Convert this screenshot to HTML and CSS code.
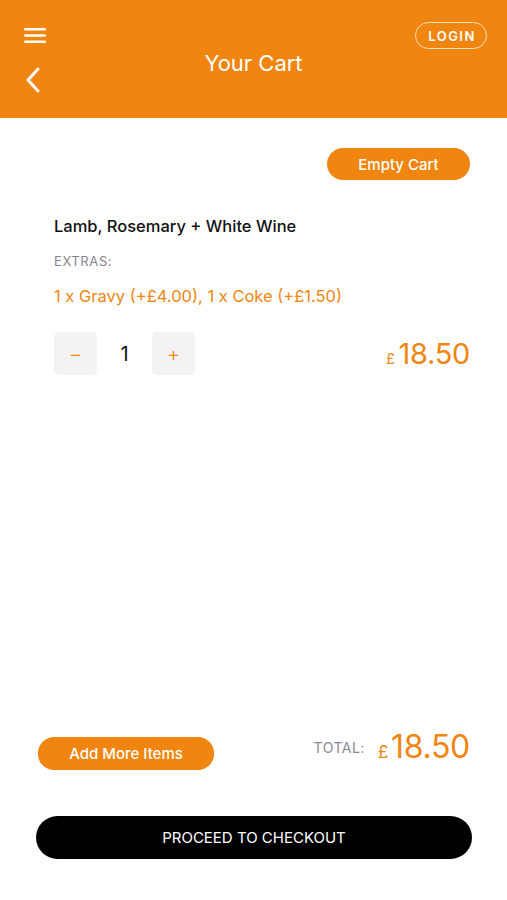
FILE: index.html
```html
<!DOCTYPE html>
<html>
<head>
    <title>Your Cart</title>
    <link rel="stylesheet" href="styles.css">
</head>
<body>
    <div class="app">
        <header class="top-bar">
            <div class="top-row">
                <svg class="menu-icon" width="22" height="15" viewBox="0 0 22 15">
                    <rect x="0" y="0" width="22" height="2.6" rx="1.3" fill="#fff"/>
                    <rect x="0" y="6.2" width="22" height="2.6" rx="1.3" fill="#fff"/>
                    <rect x="0" y="12.4" width="22" height="2.6" rx="1.3" fill="#fff"/>
                </svg>
                <button class="login-button">LOGIN</button>
            </div>
            <div class="title-row">
                <svg class="back-icon" width="16" height="26" viewBox="0 0 16 26">
                    <path d="M13 2 L3 13 L13 24" fill="none" stroke="#fff" stroke-width="3" stroke-linecap="round" stroke-linejoin="round"/>
                </svg>
                <h1 class="page-title">Your Cart</h1>
                <span></span>
            </div>
        </header>

        <main class="cart">
            <div class="cart-actions">
                <button class="pill-button">Empty Cart</button>
            </div>

            <div class="cart-item">
                <div class="item-name">Lamb, Rosemary + White Wine</div>
                <div class="extras-label">EXTRAS:</div>
                <div class="extras-value">1 x Gravy (+£4.00), 1 x Coke (+£1.50)</div>
                <div class="item-row">
                    <div class="stepper">
                        <button class="step-button">&minus;</button>
                        <span class="step-count">1</span>
                        <button class="step-button">+</button>
                    </div>
                    <div class="item-price"><span class="currency">£</span>18.50</div>
                </div>
            </div>
        </main>

        <footer class="cart-footer">
            <div class="total-row">
                <button class="pill-button add-button">Add More Items</button>
                <div class="total">
                    <span class="total-label">TOTAL:</span>
                    <span class="total-value"><span class="currency big">£</span>18.50</span>
                </div>
            </div>
            <button class="checkout-button">PROCEED TO CHECKOUT</button>
        </footer>
    </div>
</body>
</html>
```

FILE: styles.css
```css
body {
    margin: 0;
    font-family: "Inter", "Liberation Sans", sans-serif;
    background-color: #fff;
}

button {
    font-family: inherit;
    cursor: pointer;
}

.app {
    display: flex;
    flex-direction: column;
    height: 900px;
}

.top-bar {
    background-color: #f0850f;
    height: 118px;
    box-sizing: border-box;
    padding: 22px 20px 0 24px;
}

.top-row {
    display: flex;
    justify-content: space-between;
    align-items: flex-start;
    height: 26px;
}

.menu-icon {
    margin-top: 6px;
}

.login-button {
    background: none;
    border: 1.5px solid #fbe0c0;
    border-radius: 14px;
    color: #fff;
    font-size: 13px;
    font-weight: 600;
    letter-spacing: 1.5px;
    width: 72px;
    height: 27px;
    padding: 0 0 0 2px;
}

.title-row {
    display: grid;
    grid-template-columns: 1fr auto 1fr;
    align-items: start;
}

.back-icon {
    margin-top: 19px;
    margin-left: 1px;
}

.page-title {
    margin: 2px 0 0 0;
    color: #fff;
    font-size: 22px;
    font-weight: 400;
    line-height: 26px;
    position: relative;
    left: -2px;
}

.cart {
    padding: 30px 37px 0 54px;
}

.cart-actions {
    display: flex;
    justify-content: flex-end;
}

.pill-button {
    background-color: #f0850f;
    border: none;
    border-radius: 16px;
    color: #fff;
    font-size: 15px;
    font-weight: 500;
    height: 32px;
    width: 143px;
}

.cart-item {
    margin-top: 35px;
}

.item-name {
    font-size: 16.5px;
    font-weight: 500;
    color: #111;
    line-height: 22px;
}

.extras-label {
    margin-top: 16px;
    font-size: 13px;
    color: #85858c;
    letter-spacing: 0.6px;
    line-height: 16px;
}

.extras-value {
    margin-top: 17px;
    font-size: 16.5px;
    color: #f0850f;
    line-height: 20px;
}

.item-row {
    margin-top: 26px;
    display: flex;
    justify-content: space-between;
    align-items: center;
}

.stepper {
    display: flex;
    align-items: center;
}

.step-button {
    width: 43px;
    height: 43px;
    border: none;
    border-radius: 5px;
    background-color: #f3f3f5;
    color: #f0850f;
    font-size: 20px;
    font-weight: 300;
    padding: 0;
}

.step-count {
    width: 55px;
    text-align: center;
    font-size: 20px;
    color: #111;
}

.item-price {
    color: #f0850f;
    font-size: 29px;
    font-weight: 400;
    letter-spacing: -0.3px;
}

.currency {
    font-size: 14px;
    margin-right: 4px;
}

.currency.big {
    font-size: 17px;
    margin-right: 3px;
}

.cart-footer {
    margin-top: auto;
    padding: 0 35px 41px 36px;
}

.total-row {
    display: flex;
    justify-content: space-between;
    align-items: center;
    padding-left: 2px;
    padding-right: 2px;
}

.add-button {
    width: 176px;
    height: 33px;
    align-self: flex-end;
}

.total {
    display: flex;
    align-items: baseline;
    position: relative;
    top: -4px;
}

.total-label {
    font-size: 14px;
    color: #8a8a96;
    letter-spacing: 0.5px;
    margin-right: 13px;
    position: relative;
    top: -5px;
}

.total-value {
    color: #f0850f;
    font-size: 32px;
    letter-spacing: -0.3px;
}

.checkout-button {
    margin-top: 46px;
    width: 100%;
    height: 43px;
    border: none;
    border-radius: 22px;
    background-color: #000;
    color: #fff;
    font-size: 15px;
    font-weight: 400;
}
```
